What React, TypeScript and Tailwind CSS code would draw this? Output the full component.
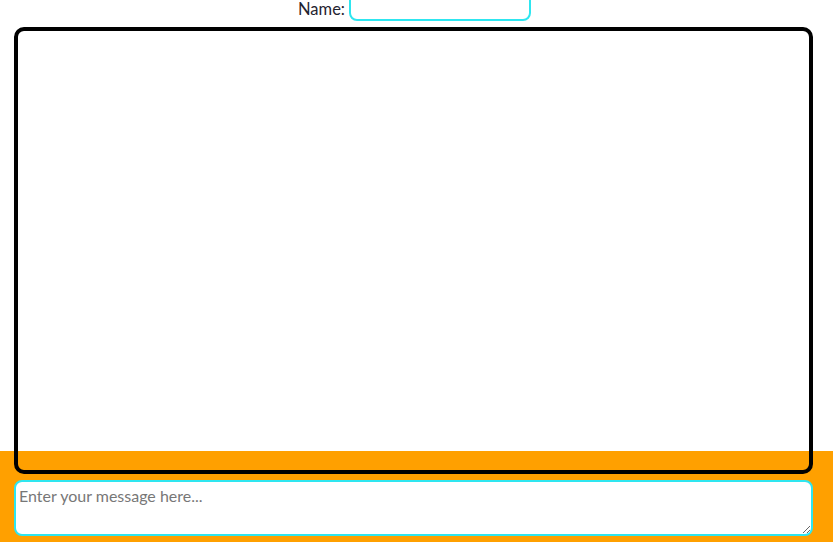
export default function App() {
  return (
    <div className="flex h-screen flex-col overflow-hidden bg-white font-['Lato','Noto_Sans',sans-serif] text-[16px] text-[#1f2330]">
      {/* name row */}
      <div className="flex h-[21px] items-end justify-center gap-[4px] pr-[4px]">
        <label className="mb-[4px] text-[16.5px] leading-[16px]">Name:</label>
        <input className="h-[31px] w-[182px] rounded-[8px] border-2 border-[#2ee6f0] bg-white px-2 outline-none" />
      </div>

      {/* chat window */}
      <div className="relative z-10 ml-[14px] mt-[6px] h-[447px] w-[799px] shrink-0 rounded-[10px] border-4 border-black" />

      {/* footer */}
      <div className="-mt-[23px] flex flex-1 bg-[#ffa000] pt-[29px] pb-[6px]">
        <textarea
          placeholder="Enter your message here..."
          className="ml-[14px] h-[56px] w-[799px] rounded-[8px] border-2 border-[#2ee6f0] bg-white px-[3px] py-[2px] leading-[24px] text-[#222] outline-none placeholder:text-[#777]"
        />
      </div>
    </div>
  )
}
